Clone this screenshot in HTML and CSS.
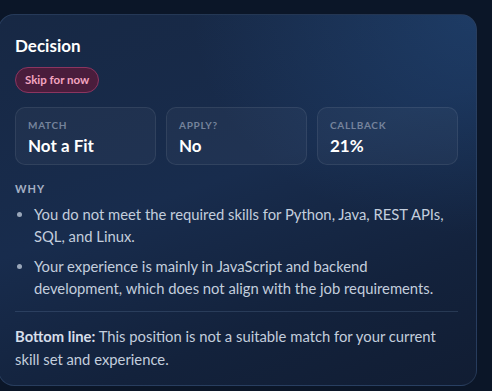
FILE: index.html
```html
<!DOCTYPE html>
<html lang="en">
<head>
    <meta charset="UTF-8">
    <title>Decision</title>
    <link rel="stylesheet" href="styles.css">
</head>
<body>
    <div class="card">
        <h2 class="card-title">Decision</h2>
        <span class="pill">Skip for now</span>

        <div class="stats">
            <div class="stat">
                <div class="stat-label">Match</div>
                <div class="stat-value">Not a Fit</div>
            </div>
            <div class="stat">
                <div class="stat-label">Apply?</div>
                <div class="stat-value">No</div>
            </div>
            <div class="stat">
                <div class="stat-label">Callback</div>
                <div class="stat-value">21%</div>
            </div>
        </div>

        <div class="section-label">Why</div>
        <ul class="reasons">
            <li>You do not meet the required skills for Python, Java, REST APIs, SQL, and Linux.</li>
            <li>Your experience is mainly in JavaScript and backend development, which does not align with the job requirements.</li>
        </ul>

        <div class="divider"></div>

        <p class="bottom-line"><strong>Bottom line:</strong> This position is not a suitable match for your current skill set and experience.</p>
    </div>
</body>
</html>
```

FILE: styles.css
```css
body {
    margin: 0;
    padding: 14px 0 0 0;
    background: #0b1628;
    font-family: 'Lato', 'Noto Sans', sans-serif;
    color: #e8eef7;
    height: 391px;
    box-sizing: border-box;
    overflow: hidden;
}

.card {
    margin-left: -2px;
    width: 479px;
    box-sizing: border-box;
    padding: 20px 18px 14px 16px;
    border-radius: 16px;
    border: 1px solid rgba(120,160,210,0.18);
    background: linear-gradient(160deg, #172844 0%, #182c4d 45%, #13223c 75%, #111d33 100%);
    position: relative;
    overflow: hidden;
}

.card::before {
    content: '';
    position: absolute;
    top: 0;
    right: 0;
    width: 60%;
    height: 60%;
    background: radial-gradient(ellipse at top right, rgba(40,90,150,0.35) 0%, transparent 70%);
    pointer-events: none;
}

.card > * {
    position: relative;
}

.card-title {
    margin: 0;
    font-size: 17px;
    font-weight: 700;
    color: #ffffff;
    line-height: 22px;
}

.pill {
    display: inline-block;
    margin-top: 10px;
    padding: 0 9px;
    height: 24px;
    line-height: 24px;
    border-radius: 13px;
    background: #4a1d3c;
    border: 1px solid #8c3560;
    color: #f3a5c0;
    font-size: 11.5px;
    font-weight: 700;
}

.stats {
    display: grid;
    grid-template-columns: 1fr 1fr 1fr;
    gap: 10px;
    margin-top: 14px;
}

.stat {
    height: 58px;
    box-sizing: border-box;
    padding: 10px 12px;
    border-radius: 10px;
    background: rgba(255,255,255,0.035);
    border: 1px solid rgba(255,255,255,0.08);
}

.stat-label {
    font-size: 10px;
    font-weight: 700;
    letter-spacing: 0.7px;
    text-transform: uppercase;
    color: #75839b;
    line-height: 14px;
}

.stat-value {
    margin-top: 3px;
    font-size: 17px;
    font-weight: 700;
    color: #ffffff;
    line-height: 22px;
}

.section-label {
    margin-top: 16px;
    font-size: 11px;
    font-weight: 700;
    letter-spacing: 1px;
    text-transform: uppercase;
    color: #a4b0c4;
    line-height: 16px;
}

.reasons {
    margin: 6px 0 0 0;
    padding-left: 19px;
    color: #c3cedd;
    font-size: 14.8px;
    line-height: 22px;
}

.reasons li {
    margin-bottom: 8px;
}

.reasons li::marker {
    color: #9aa7ba;
}

.divider {
    height: 1px;
    background: rgba(140,170,210,0.18);
    margin-top: 12px;
}

.bottom-line {
    margin: 13px 0 0 0;
    color: #c3cedd;
    font-size: 14.8px;
    line-height: 23px;
}

.bottom-line strong {
    color: #d6deea;
}
```
